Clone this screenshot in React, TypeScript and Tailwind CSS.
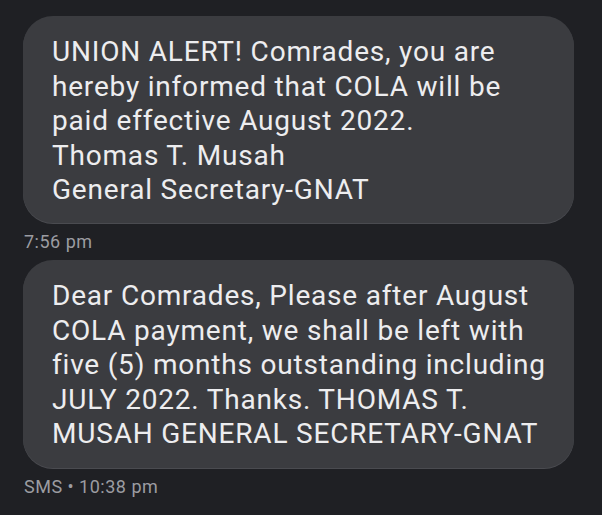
export default function App() {
  const font = { fontFamily: "Roboto, 'Noto Sans', sans-serif" };
  return (
    <div className="w-[602px] h-[515px] bg-[#1f2024] overflow-hidden pt-[16px] pl-[23px]" style={font}>
      <div className="w-[551px] h-[207px] rounded-[30px] bg-[#3b3c40] pl-[29px] pt-[19px] text-[28px] tracking-[0.8px] leading-[34.6px] text-[#ededef] shadow-[0_1px_0_#4a4b50]">
        <div>UNION ALERT! Comrades, you are</div>
        <div>hereby informed that COLA will be</div>
        <div>paid effective August 2022.</div>
        <div>Thomas T. Musah</div>
        <div>General Secretary-GNAT</div>
      </div>
      <div className="h-[37px] pl-[1px] text-[18px] tracking-[0.5px] leading-[37px] text-[#9b9ca1]">7:56 pm</div>
      <div className="w-[551px] h-[208px] rounded-[30px] bg-[#3b3c40] pl-[29px] pt-[19px] text-[28px] tracking-[0.8px] leading-[34.6px] text-[#ededef] shadow-[0_1px_0_#4a4b50]">
        <div>Dear Comrades, Please after August</div>
        <div>COLA payment, we shall be left with</div>
        <div>five (5) months outstanding including</div>
        <div>JULY 2022. Thanks. THOMAS T.</div>
        <div>MUSAH GENERAL SECRETARY-GNAT</div>
      </div>
      <div className="h-[37px] pl-[1px] text-[18px] tracking-[0.5px] leading-[37px] text-[#9b9ca1]">SMS • 10:38 pm</div>
    </div>
  );
}
